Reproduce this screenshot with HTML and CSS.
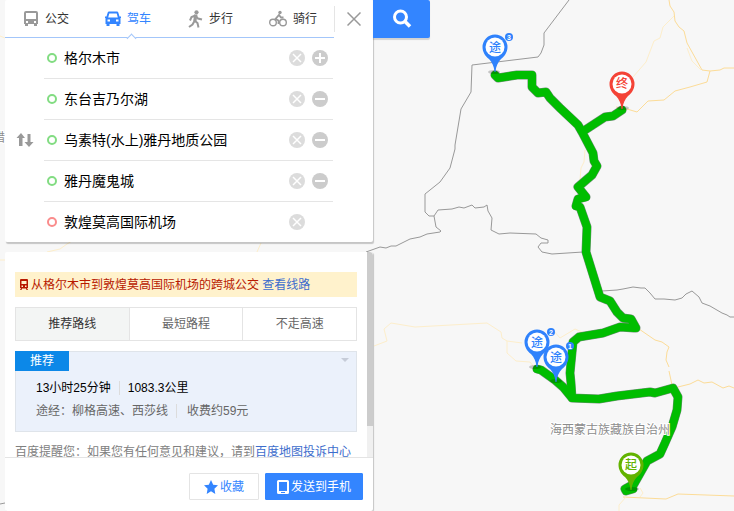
FILE: index.html
```html
<!DOCTYPE html>
<html lang="zh-CN">
<head>
    <meta charset="UTF-8">
    <meta name="viewport" content="width=device-width, initial-scale=1.0">
    <title>百度地图</title>
    <link rel="stylesheet" href="styles.css">
</head>
<body>

    <!-- 地图 -->
    <svg class="map" viewBox="0 0 734 511" preserveAspectRatio="xMinYMin slice">
        <defs>
            <symbol id="pin" viewBox="0 0 26 40" overflow="visible">
                <path d="M13 0.500A12.500 12.500 0 0 0 0.500 13C0.500 18 3.500 22.500 7 25C10 28 12 32 12.500 38H13.500C14 32 16 28 19 25C22.500 22.500 25.500 18 25.500 13A12.500 12.500 0 0 0 13 0.500Z" fill="currentColor"/>
                <circle cx="13" cy="13" r="9.500" fill="#fff"/>
            </symbol>
        </defs>

        <!-- 省界 -->
        <g class="border">
            <path d="M569 0L544 33L544 45L541 53L538 57L472 65L471 92L461 109L455 145L455 149L450 168L440 182L425 194L425 212L429 216L434 216L438 210L452 209L459 207L464 208L472 205L475 208L484 207L487 205L488 211L492 218L491 230L499 234L510 233L536 234L541 238L548 240L548 243L541 243L538 247L542 252L552 254L583 252"/>
            <path d="M434 216L436 227L441 231L440 232L427 234L420 237L410 239L396 246L391 246L386 248L380 247L366 252"/>
            <path d="M602 291L617 290L623 289L633 287L641 288L645 288L650 293L655 299L664 299L675 300L682 298L686 294L692 291L699 297L702 303L710 306L722 313L727 315L730 317L734 317"/>
            <path d="M0 504L5 503"/>
        </g>

        <!-- 道路 -->
        <g class="road">
            <path d="M669 0L670 6L674 12L675 21L679 27L684 31L687 43L702 70L710 71L720 70L724 68L734 68"/>
            <path d="M710 71L707 82L690 87L675 91L664 100L648 101L637 112L627 109L616 107"/>
            <path d="M639 329L655 340L662 342L669 347L667 352L666 360L669 367M669 371L672 385"/>
            <path d="M678 387L690 384L698 380L704 383L712 382L723 388L729 386L734 388"/>
            <path d="M623 497L666 499L678 494L734 496"/>
        </g>
        <g class="road road-minor">
            <path d="M674 16L663 27L660 38L654 41L646 62L633 77"/>
            <path d="M585 150L584 162L581 168L580 180"/>
            <path d="M374 346L387 341L384 329L391 323L415 327L487 323L501 332L502 338L507 341L522 343"/>
            <path d="M507 341L507 353L516 361L530 362L534 367"/>
            <path d="M553 330L560 338L575 329L582 332"/>
            <path d="M687 48L692 61L701 70"/>
            <path d="M640 488L643 493L640 497M626 497L619 505L619 511"/>
            <path d="M0 36L5 38M0 260L5 260M47 252L60 249L67 244L72 241M257 252L261 243"/>
        </g>

        <!-- 驾车路线 -->
        <g id="route">
            <g class="route-edge">
                <path id="main-route" d="M633 489L626 491L625 489L634 484L647 461L660 454L665 443L672 427L677 410L678 397L673 388L655 393L650 392L617 396L599 399L572 398L563 387L555 380L541 370L537 369M572 398L571 383L570 373L573 342L579 337L603 333L620 327L634 328L636 328L631 319L623 318L617 312L610 301L600 297L586 252L587 227L580 207L576 206L578 199L586 197L578 187L592 175L597 166L594 161L593 153L582 132L605 117L613 116L622 110M582 132L578 125L560 108L550 98L546 92L538 93L532 87L532 75L517 75L498 78L495 75"/>
            </g>
            <use class="route-line" href="#main-route"/>
        </g>

        <ellipse class="pin-shadow" cx="494" cy="72" rx="6" ry="2"/>
        <ellipse class="pin-shadow" cx="535" cy="367" rx="6" ry="2"/>
        <ellipse class="pin-shadow" cx="556" cy="381" rx="6" ry="2"/>
        <ellipse class="pin-shadow" cx="623" cy="108" rx="6" ry="2"/>
        <ellipse class="pin-shadow" cx="632" cy="489" rx="7" ry="2"/>

        <text class="map-label" x="550" y="434">海西蒙古族藏族自治州</text>
        <text class="map-label" x="-7" y="142">措</text>

        <g class="pin pin-way">
            <use href="#pin" x="482" y="34" width="26" height="40"/>
            <text x="495" y="52">途</text>
            <circle cx="509" cy="37" r="4"/>
            <text class="pin-no" x="509" y="40">3</text>
        </g>
        <g class="pin pin-way">
            <use href="#pin" x="524" y="329" width="26" height="40"/>
            <text x="537" y="347">途</text>
            <circle cx="551" cy="332" r="4"/>
            <text class="pin-no" x="551" y="335">2</text>
        </g>
        <g class="pin pin-way">
            <use href="#pin" x="543" y="344" width="26" height="40"/>
            <text x="556" y="362">途</text>
            <circle cx="570" cy="346" r="4"/>
            <text class="pin-no" x="570" y="349">1</text>
        </g>
        <g class="pin pin-end">
            <use href="#pin" x="609" y="71" width="26" height="40"/>
            <text x="622" y="88">终</text>
        </g>
        <g class="pin pin-start">
            <use href="#pin" x="618" y="452" width="26" height="40"/>
            <text x="631" y="469">起</text>
        </g>
    </svg>

    <div class="app">
        <div class="side">

            <!-- 路线搜索 -->
            <form class="card search-card">
                <div class="card-head">
                    <div class="modes">
                        <button type="button" class="mode">
                            <svg width="16" height="18" viewBox="0 0 16 18"><path fill="currentColor" fill-rule="evenodd" d="M3 1H13Q15 1 15 3V14H14V16H11V14H5V16H2V14H1V3Q1 1 3 1ZM3 3V9H13V3ZM3 11V13H5V11ZM11 11V13H13V11Z"/></svg>
                            <span>公交</span>
                        </button>
                        <button type="button" class="mode active">
                            <svg width="16" height="18" viewBox="0 0 16 18"><path fill="currentColor" fill-rule="evenodd" d="M4 1.500H12Q13 1.500 13.300 2.500L14.500 6.500H16V8H15.500V14H14.500V16H11.500V14H4.500V16H1.500V14H0.500V8H0V6.500H1.500L2.700 2.500Q3 1.500 4 1.500ZM4.300 3.500L3.200 7.500H12.800L11.700 3.500ZM2.500 9.500V11.500H5V9.500ZM11 9.500V11.500H13.500V9.500Z"/></svg>
                            <span>驾车</span>
                        </button>
                        <button type="button" class="mode">
                            <svg width="16" height="18" viewBox="0 0 16 18"><circle cx="9.500" cy="2.300" r="2.100" fill="currentColor"/><path fill="none" stroke="currentColor" stroke-width="2" d="M8.500 5.500L7.500 10.500L10.500 13L11.500 17.500M7.500 11L5.500 14.500L2 17M8.500 5.500L4.500 7L3 10.500M9 6L11 8.500L15 9.500"/><path d="M7 4.500H10.500L9.500 11L6.500 11Z" fill="currentColor"/></svg>
                            <span>步行</span>
                        </button>
                        <button type="button" class="mode">
                            <svg width="18" height="18" viewBox="0 0 18 18"><g fill="none" stroke="currentColor" stroke-width="1.400"><circle cx="4" cy="12.500" r="3.300"/><circle cx="14" cy="12.500" r="3.300"/><path stroke-width="1.800" d="M9.500 14V10.500L6.500 9L10 5L12 7.500H14.500"/></g><circle cx="11" cy="2.500" r="1.700" fill="currentColor"/></svg>
                            <span>骑行</span>
                        </button>
                    </div>
                    <button type="button" class="close" aria-label="关闭">
                        <svg width="14" height="14" viewBox="0 0 14 14"><path d="M0.500 0.500L13.500 13.500M13.500 0.500L0.500 13.500" stroke="#999" stroke-width="1.500"/></svg>
                    </button>
                </div>

                <div class="stops">
                    <button type="button" class="swap" aria-label="交换起终点">
                        <svg width="18" height="14" viewBox="0 0 18 14"><path fill="#999" d="M5 0L9 5H6.500V13H3V5H0.500ZM13 14L8.500 9H11.500V1H14.500V9H17.500Z"/></svg>
                    </button>
                    <ul class="stop-list">
                        <li class="stop">
                            <input type="text" aria-label="起点" value="格尔木市">
                            <button type="button" class="round light" aria-label="清除"><svg width="16" height="16" viewBox="0 0 16 16"><path d="M4 4L12 12M12 4L4 12"/></svg></button>
                            <button type="button" class="round" aria-label="添加途经点"><svg width="16" height="16" viewBox="0 0 16 16"><path d="M3 8H13M8 3V13"/></svg></button>
                        </li>
                        <li class="stop">
                            <input type="text" aria-label="途经点1" value="东台吉乃尔湖">
                            <button type="button" class="round light" aria-label="清除"><svg width="16" height="16" viewBox="0 0 16 16"><path d="M4 4L12 12M12 4L4 12"/></svg></button>
                            <button type="button" class="round" aria-label="删除途经点"><svg width="16" height="16" viewBox="0 0 16 16"><path d="M3 8H13"/></svg></button>
                        </li>
                        <li class="stop">
                            <input type="text" aria-label="途经点2" value="乌素特(水上)雅丹地质公园">
                            <button type="button" class="round light" aria-label="清除"><svg width="16" height="16" viewBox="0 0 16 16"><path d="M4 4L12 12M12 4L4 12"/></svg></button>
                            <button type="button" class="round" aria-label="删除途经点"><svg width="16" height="16" viewBox="0 0 16 16"><path d="M3 8H13"/></svg></button>
                        </li>
                        <li class="stop">
                            <input type="text" aria-label="途经点3" value="雅丹魔鬼城">
                            <button type="button" class="round light" aria-label="清除"><svg width="16" height="16" viewBox="0 0 16 16"><path d="M4 4L12 12M12 4L4 12"/></svg></button>
                            <button type="button" class="round" aria-label="删除途经点"><svg width="16" height="16" viewBox="0 0 16 16"><path d="M3 8H13"/></svg></button>
                        </li>
                        <li class="stop end">
                            <input type="text" aria-label="终点" value="敦煌莫高国际机场">
                            <button type="button" class="round light" aria-label="清除"><svg width="16" height="16" viewBox="0 0 16 16"><path d="M4 4L12 12M12 4L4 12"/></svg></button>
                        </li>
                    </ul>
                </div>
            </form>

            <!-- 路线结果 -->
            <div class="card result-card">
                <div class="scroll">
                    <div class="result">
                        <p class="notice">
                            <svg width="10" height="12" viewBox="0 0 10 12"><path fill="currentColor" fill-rule="evenodd" d="M2 0H8Q9 0 9 1V9H8L9 11H7.500L7 9.500H3L2.500 11H1L2 9H1V1Q1 0 2 0ZM2.500 2V5H7.500V2ZM2.500 6.500V8H4V6.500ZM6 6.500V8H7.500V6.500Z"/></svg>
                            <span>从格尔木市到敦煌莫高国际机场的跨城公交 <a href="#">查看线路</a></span>
                        </p>
                        <div class="plans">
                            <button type="button" class="plan active">推荐路线</button>
                            <button type="button" class="plan">最短路程</button>
                            <button type="button" class="plan">不走高速</button>
                        </div>
                        <div class="route-card">
                            <div class="route-top">
                                <span class="tag">推荐</span>
                                <span class="arrow"></span>
                            </div>
                            <div class="route-info">
                                <p class="route-time"><span>13小时25分钟</span><span>1083.3公里</span></p>
                                <p class="route-via"><span>途经：柳格高速、西莎线</span><span>收费约59元</span></p>
                            </div>
                        </div>
                        <p class="tip">百度提醒您：如果您有任何意见和建议，请到<a href="#">百度地图投诉中心</a></p>
                    </div>
                    <div class="scrollbar"><div class="thumb"></div></div>
                </div>
                <div class="actions">
                    <button type="button" class="btn">
                        <svg width="14" height="14" viewBox="0 0 14 14"><path fill="currentColor" d="M7 0L9.200 4.700L14 5.300L10.400 8.700L11.300 14L7 11.300L2.700 14L3.600 8.700L0 5.300L4.800 4.700Z"/></svg>
                        <span>收藏</span>
                    </button>
                    <button type="button" class="btn primary">
                        <svg width="12" height="14" viewBox="0 0 12 14"><path fill="currentColor" fill-rule="evenodd" d="M1.500 0H10.500Q12 0 12 1.500V12.500Q12 14 10.500 14H1.500Q0 14 0 12.500V1.500Q0 0 1.500 0ZM2 2V11H10V2ZM4 12V13H8V12Z"/></svg>
                        <span>发送到手机</span>
                    </button>
                </div>
            </div>
        </div>

        <button type="button" class="search-btn" aria-label="搜索">
            <svg width="20" height="20" viewBox="0 0 20 20"><g fill="none" stroke="#fff" stroke-width="3"><circle cx="8.500" cy="8" r="6"/><path d="M13 12.500L18 17.500" stroke-width="3.500"/></g></svg>
        </button>
    </div>

</body>
</html>
```
FILE: styles.css
```css
*, *::before, *::after {
    box-sizing: border-box;
}
body {
    margin: 0;
    font-family: "Liberation Sans", "Noto Sans CJK SC", sans-serif;
    font-size: 12px;
    line-height: 20px;
    color: #333;
    background-color: #f7f7f7;
    overflow: hidden;
}
button, input {
    font: inherit;
    color: inherit;
    background: none;
    border: none;
    padding: 0;
}
button {
    cursor: pointer;
}
a {
    color: #3d6dcc;
    text-decoration: none;
}
p, ul {
    margin: 0;
    padding: 0;
}
svg {
    display: block;
    flex: none;
}

/* 地图 */
.map {
    position: absolute;
    top: 0;
    left: 0;
    width: 100%;
    height: 100%;
}
.border {
    fill: none;
    stroke: #999;
    stroke-width: 1;
}
.road {
    fill: none;
    stroke: #fcdc98;
    stroke-width: 1;
}
.road-minor {
    stroke: #fdeecb;
}
.route-edge, .route-line {
    fill: none;
    stroke-linejoin: round;
    stroke-linecap: round;
}
.route-edge {
    stroke: #6f8f76;
    stroke-width: 9;
}
.route-line {
    stroke: #00bd00;
    stroke-width: 8;
}
.map-label {
    font-size: 12px;
    fill: #8c8c8c;
    stroke: #fff;
    stroke-width: 2;
    paint-order: stroke;
}
.pin text {
    font-size: 12px;
    font-weight: 500;
    text-anchor: middle;
    fill: currentColor;
}
.pin circle {
    fill: currentColor;
}
.pin .pin-no {
    font-size: 7px;
    font-weight: bold;
    fill: #fff;
}
.pin-way {
    color: #2f82fc;
}
.pin-end {
    color: #f44336;
}
.pin-start {
    color: #62b300;
}
.pin-shadow {
    fill: rgba(0, 0, 0, 0.2);
}

/* 侧栏 */
.app {
    position: relative;
    display: flex;
    align-items: flex-start;
    height: 100vh;
    padding-left: 5px;
}
.side {
    display: flex;
    flex-direction: column;
    gap: 10px;
    width: 368px;
    height: 100%;
}
.card {
    background-color: #fff;
    border-radius: 2px;
    box-shadow: 1px 1px 1px rgba(0, 0, 0, 0.2);
}
.search-card {
    box-shadow: 1px 2px 1px rgba(0, 0, 0, 0.2);
}
.search-btn {
    display: flex;
    align-items: center;
    justify-content: center;
    width: 57px;
    height: 38px;
    background-color: #3385ff;
    border-radius: 0 2px 2px 0;
    box-shadow: 0 2px 1px rgba(0, 0, 0, 0.15);
}

/* 路线搜索 */
.card-head {
    display: flex;
    height: 38px;
}
.modes {
    display: flex;
    flex: 1;
    border-bottom: 1px solid #a3c6fa;
}
.mode {
    position: relative;
    display: flex;
    align-items: center;
    gap: 6px;
    width: 82px;
    padding-left: 18px;
}
.mode svg {
    color: #999;
}
.mode.active, .mode.active svg {
    color: #3385ff;
}
.mode.active::after {
    content: "";
    position: absolute;
    left: 41px;
    bottom: -5px;
    width: 7px;
    height: 7px;
    background-color: #fff;
    border: solid #a3c6fa;
    border-width: 1px 0 0 1px;
    transform: rotate(45deg);
}
.close {
    display: flex;
    align-items: center;
    justify-content: center;
    width: 39px;
    height: 26px;
    margin-top: 6px;
    border-left: 1px solid #e5e5e5;
}
.stops {
    display: flex;
    align-items: center;
    padding-right: 40px;
}
.swap {
    width: 18px;
    margin: 0 10px 0 11px;
}
.stop-list {
    flex: 1;
    list-style: none;
}
.stop {
    display: flex;
    align-items: center;
    gap: 7px;
    height: 41px;
    padding-left: 3px;
    padding-right: 5px;
    border-bottom: 1px solid #e5e5e5;
}
.stop::before {
    content: "";
    width: 10px;
    height: 10px;
    border: 2px solid #82dc82;
    border-radius: 50%;
}
.stop.end {
    height: 40px;
    border-bottom: none;
    padding-right: 28px;
}
.stop.end::before {
    border-color: #fa8c8c;
}
.stop input {
    flex: 1;
    min-width: 0;
    font-size: 14px;
    color: #000;
}
.round {
    width: 16px;
    height: 16px;
    border-radius: 50%;
    background-color: #ccc;
}
.round.light {
    background-color: #dcdcdc;
}
.round path {
    fill: none;
    stroke: #fff;
    stroke-width: 2;
}
.round.light path {
    stroke-width: 1.5;
}

/* 路线结果 */
.result-card {
    display: flex;
    flex-direction: column;
    flex: 1;
    min-height: 0;
}
.scroll {
    display: flex;
    flex: 1;
    min-height: 0;
    overflow: hidden;
}
.result {
    flex: 1;
    padding: 20px 10px 0;
}
.scrollbar {
    width: 6px;
    background-color: #f0f0f0;
}
.thumb {
    height: 85%;
    background-color: #ccc;
    border-radius: 0 4px 0 0;
}
.notice {
    display: flex;
    align-items: center;
    gap: 2px;
    height: 25px;
    padding-left: 4px;
    color: #b81900;
    background-color: #fff2cc;
}
.plans {
    display: flex;
    height: 34px;
    margin: 10px 0;
    border: 1px solid #e4e4e4;
}
.plan {
    flex: 1;
    color: #666;
}
.plan + .plan {
    border-left: 1px solid #e4e4e4;
}
.plan.active {
    color: #333;
    background-color: #f3f5f4;
}
.route-card {
    background-color: #ebf1fb;
    box-shadow: inset 0 0 0 1px #dfe4ea;
}
.route-top {
    display: flex;
    justify-content: space-between;
}
.tag {
    width: 54px;
    color: #fff;
    text-align: center;
    background-color: #0c88e8;
}
.arrow {
    margin: 7px 8px 0 0;
    border: 4px solid transparent;
    border-top-color: #c6ccd8;
}
.route-info {
    padding: 6px 21px 10px;
}
.route-time {
    color: #000;
    line-height: 23px;
}
.route-via {
    color: #666;
    line-height: 22px;
}
.route-info span + span {
    margin-left: 8px;
    padding-left: 8px;
    border-left: 1px solid #dcdcdc;
}
.route-via span + span {
    padding-left: 10px;
}
.tip {
    margin-top: 10px;
    color: #808080;
    white-space: nowrap;
}
.actions {
    display: flex;
    justify-content: flex-end;
    gap: 6px;
    padding: 15px 10px 11px;
    border-top: 1px solid #e4e4e4;
}
.btn {
    display: flex;
    align-items: center;
    justify-content: center;
    gap: 2px;
    height: 27px;
    padding: 0 14px;
    color: #3385ff;
    border: 1px solid #e4e4e4;
    border-radius: 1px;
}
.btn.primary {
    padding: 0 11px;
    color: #fff;
    background-color: #3385ff;
    border-color: #3385ff;
}
```
